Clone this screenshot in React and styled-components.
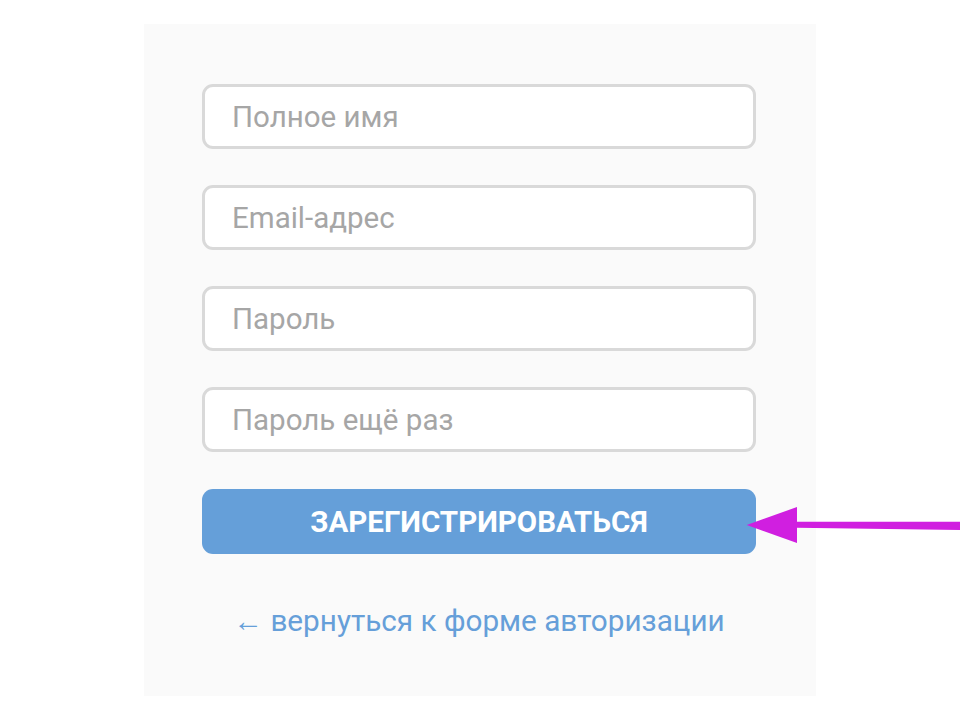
import React from "react";
import styled, { createGlobalStyle } from "styled-components";

const Global = createGlobalStyle`
  html, body { margin: 0; padding: 0; background: #ffffff; }
  body { font-family: Roboto, "Noto Sans", Arial, sans-serif; }
  * { box-sizing: border-box; }
`;

const Page = styled.div`
  position: relative;
  width: 960px;
  height: 720px;
  padding-top: 24px;
  overflow: hidden;
`;

const Panel = styled.form`
  width: 672px;
  height: 672px;
  margin: 0 auto;
  background: #fafafa;
  padding: 60px 60px 0 58px;
  display: flex;
  flex-direction: column;
  gap: 36px;
`;

const Field = styled.input`
  display: block;
  width: 100%;
  height: 65px;
  background: #ffffff;
  border: 3px solid #d9d9d9;
  border-radius: 11px;
  padding: 0 0 0 27px;
  font-family: Roboto, Arial, sans-serif;
  font-size: 29.5px;
  color: #444;
  outline: none;
  &::placeholder { color: #a6a6a6; }
`;

const Submit = styled.button`
  width: 100%;
  height: 65px;
  margin-top: 1px;
  border: none;
  border-radius: 11px;
  background: #659fd9;
  color: #ffffff;
  font-family: Roboto, Arial, sans-serif;
  font-weight: 700;
  font-size: 29.5px;
  cursor: pointer;
`;

const BackLink = styled.a`
  display: block;
  margin-top: 14px;
  text-align: center;
  font-family: Roboto, Arial, sans-serif;
  font-size: 29.7px;
  line-height: 34px;
  color: #669fd9;
  text-decoration: none;
`;

const Pointer = styled.svg`
  position: absolute;
  left: 740px;
  top: 500px;
`;

export default function App() {
  return (
    <>
      <Global />
      <Page>
        <Panel onSubmit={(e) => e.preventDefault()}>
          <Field type="text" placeholder="Полное имя" />
          <Field type="email" placeholder="Email-адрес" />
          <Field type="password" placeholder="Пароль" />
          <Field type="password" placeholder="Пароль ещё раз" />
          <Submit type="submit">ЗАРЕГИСТРИРОВАТЬСЯ</Submit>
          <BackLink href="#">← вернуться к форме авторизации</BackLink>
        </Panel>
        <Pointer width="220" height="50" viewBox="0 0 220 50">
          <path d="M56 21.8 L220 21.7 L220 30 L56 27.8 Z" fill="#d01fe0" />
          <path d="M6.7 25 L57 7 L57 43 Z" fill="#d01fe0" />
        </Pointer>
      </Page>
    </>
  );
}
